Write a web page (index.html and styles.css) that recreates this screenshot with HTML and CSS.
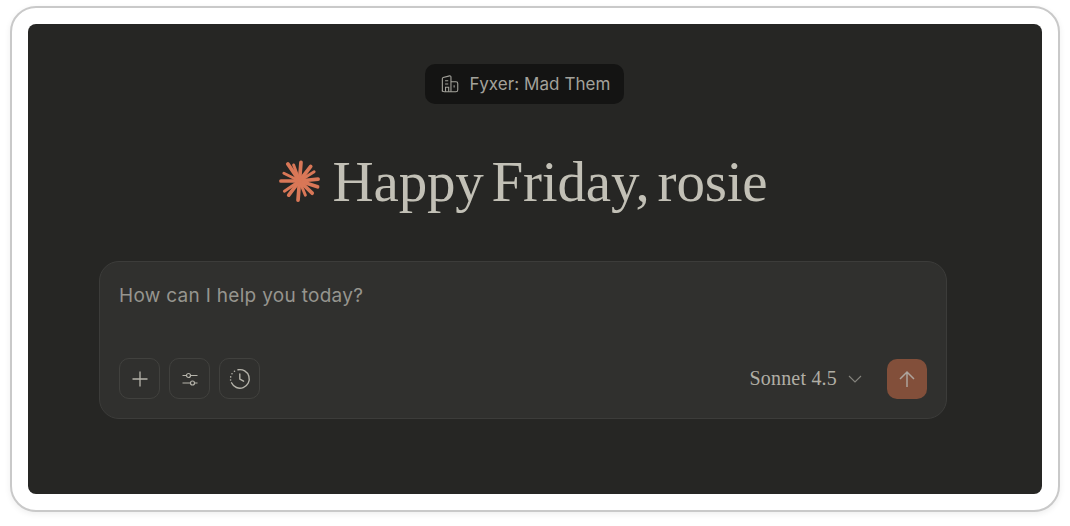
FILE: index.html
```html
<!DOCTYPE html>
<html lang="en">
  <head>
    <meta charset="UTF-8" />
    <title>Claude</title>
    <link rel="stylesheet" href="styles.css">
  </head>
  <body>
    <div class="frame">
      <div class="app">
        <div class="org_pill">
          <svg class="org_icon" width="20" height="20" viewBox="0 0 20 20" fill="none" stroke="currentColor" stroke-width="1.2">
            <path d="M1.500 18.500V4c0-.6.4-1 .9-1.200L9.500 1c.8-.2 1.500.4 1.500 1.200v16.300" />
            <path d="M11 7.500h5.500c1.100 0 2 .9 2 2v7c0 1.100-.9 2-2 2H3.500c-1.100 0-2-.9-2-2" />
            <path d="M4.500 6.500h3.500M4.500 10h3.500M5 18.500v-5h3.500v5M14.500 11.500v2.500" />
          </svg>
          <span>Fyxer: Mad Them</span>
        </div>

        <div class="greeting">
          <svg class="spark" width="41" height="42" viewBox="0 0 42 42" stroke="#d97757" stroke-width="3.800" stroke-linecap="round">
            <path d="M21 21 L22.500 2" />
            <path d="M21 21 L32.500 6" />
            <path d="M21 21 L36 11.500" stroke-width="3" />
            <path d="M21 21 L40 19" />
            <path d="M21 21 L39.500 27" />
            <path d="M21 21 L34 33.500" />
            <path d="M21 21 L27 35.500" stroke-width="3" />
            <path d="M21 21 L19.500 40.500" />
            <path d="M21 21 L10 35.500" />
            <path d="M21 21 L5.500 31.500" stroke-width="3" />
            <path d="M21 21 L2 21" />
            <path d="M21 21 L5 13" stroke-width="3" />
            <path d="M21 21 L9 3.500" />
            <path d="M21 21 L15 4.500" stroke-width="3" />
          </svg>
          <h1>Happy Friday, rosie</h1>
        </div>

        <div class="composer">
          <div class="prompt">How can I help you today?</div>
          <div class="toolbar">
            <div class="tools">
              <button class="tool_btn">
                <svg width="20" height="20" viewBox="0 0 20 20" fill="none" stroke="currentColor" stroke-width="1.300">
                  <path d="M10 2.500v15M2.500 10h15" />
                </svg>
              </button>
              <button class="tool_btn">
                <svg width="20" height="20" viewBox="0 0 20 20" fill="none" stroke="currentColor" stroke-width="1.200">
                  <path d="M2.500 6.500h4M10.500 6.500h7M2.500 14h8M14.500 14h3" />
                  <circle cx="8.500" cy="6.500" r="2" />
                  <circle cx="12.500" cy="14" r="2" />
                </svg>
              </button>
              <button class="tool_btn">
                <svg width="22" height="22" viewBox="0 0 22 22" fill="none" stroke="currentColor" stroke-width="1.400" stroke-linecap="round">
                  <path d="M9 1.800A9.300 9.300 0 1 1 2.500 14.800" />
                  <path d="M10.800 6V11l3.800 2.200" />
                  <path d="M5.500 3.300v.01M3 5.800v.01M1.700 8.900v.01M1.600 12v.01" stroke-width="1.600" />
                </svg>
              </button>
            </div>
            <div class="model_side">
              <div class="model">
                <span>Sonnet 4.5</span>
                <svg width="16" height="16" viewBox="0 0 16 16" fill="none" stroke="currentColor" stroke-width="1.100">
                  <path d="M2 5 8 11l6-6" />
                </svg>
              </div>
              <button class="send_btn">
                <svg width="20" height="20" viewBox="0 0 20 20" fill="none" stroke="currentColor" stroke-width="1.500">
                  <path d="M10 18V3M3 10 10 3l7 7" />
                </svg>
              </button>
            </div>
          </div>
        </div>
      </div>
    </div>
  </body>
</html>
```

FILE: styles.css
```css
* {
  box-sizing: border-box;
}

html,
body {
  margin: 0;
  height: 100%;
  background-color: #ffffff;
}

body {
  padding: 6px 10px 14px 10px;
  overflow: hidden;
}

.frame {
  height: 506px;
  padding: 16px;
  background-color: #ffffff;
  border: 2px solid #c9c9c9;
  border-radius: 26px;
  box-shadow: 0 2px 6px rgba(0, 0, 0, 0.07);
}

.app {
  height: 100%;
  display: flex;
  flex-direction: column;
  align-items: center;
  padding: 40px 24px 0 0;
  background-color: #262624;
  border-radius: 8px;
}

.org_pill {
  display: flex;
  align-items: center;
  gap: 11px;
  width: 199px;
  height: 40px;
  margin-left: 2px;
  padding: 0 13px 0 16px;
  background-color: #141413;
  border-radius: 10px;
  color: #a3a29b;
  font-family: Inter, "Noto Sans", sans-serif;
  font-size: 17px;
  letter-spacing: 0.07px;
  white-space: nowrap;
}

.greeting {
  display: flex;
  align-items: center;
  gap: 13px;
  margin-top: 43px;
  height: 68px;
}

.greeting h1 {
  margin: 0;
  color: #c2c0b6;
  font-family: "Liberation Serif", serif;
  font-size: 57px;
  font-weight: 400;
  letter-spacing: -0.2px;
  word-spacing: -6px;
}

.composer {
  width: 848px;
  height: 158px;
  margin-top: 46px;
  padding: 19px;
  display: flex;
  flex-direction: column;
  justify-content: space-between;
  background-color: #30302e;
  border: 1px solid #3c3c3a;
  border-radius: 20px;
}

.prompt {
  color: #96958e;
  font-family: Inter, "Noto Sans", sans-serif;
  font-size: 19px;
  letter-spacing: 0.3px;
  line-height: 28px;
  margin-top: 1px;
}

.toolbar {
  display: flex;
  align-items: center;
  justify-content: space-between;
}

.tools {
  display: flex;
  gap: 9px;
}

.tool_btn {
  width: 41px;
  height: 41px;
  display: flex;
  align-items: center;
  justify-content: center;
  padding: 0;
  background: none;
  border: 1px solid #41413e;
  border-radius: 10px;
  color: #b5b3aa;
}

.model_side {
  display: flex;
  align-items: center;
  gap: 24px;
}

.model {
  display: flex;
  align-items: center;
  gap: 10px;
  color: #b0aea5;
  font-family: "Liberation Serif", serif;
  font-size: 20px;
  letter-spacing: 0.2px;
}

.model svg {
  color: #85847d;
}

.send_btn {
  width: 40px;
  height: 40px;
  display: flex;
  align-items: center;
  justify-content: center;
  padding: 0;
  background-color: #824f3a;
  border: none;
  border-radius: 10px;
  color: #ada49c;
}
```
